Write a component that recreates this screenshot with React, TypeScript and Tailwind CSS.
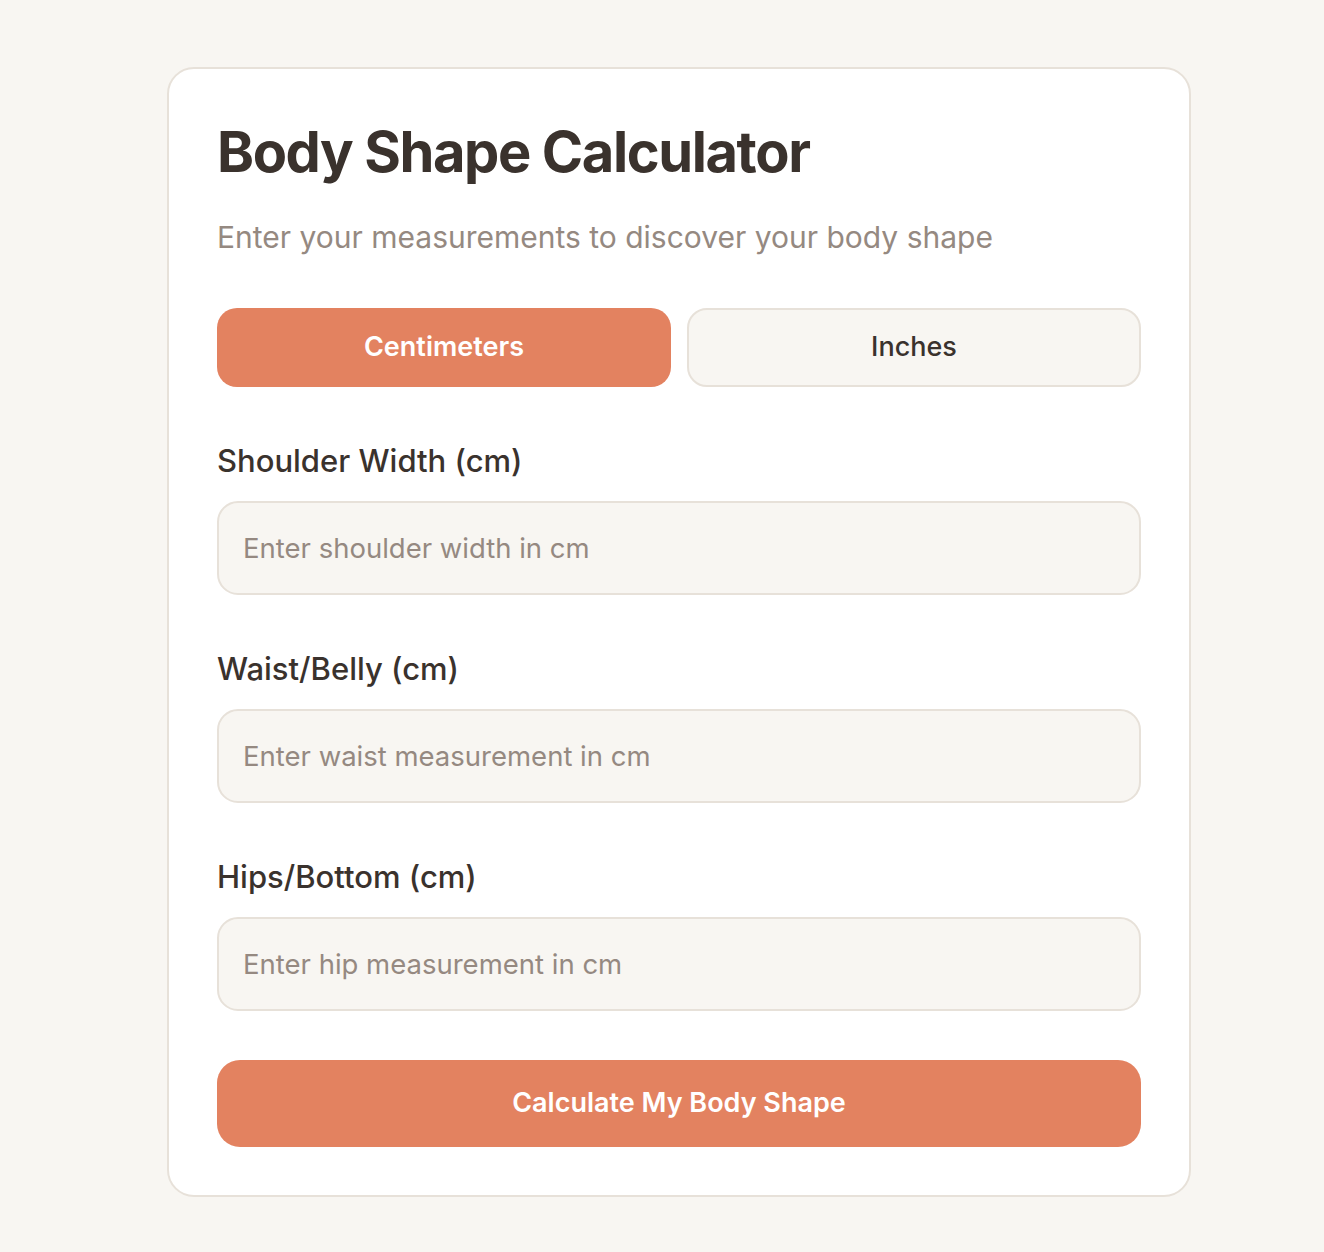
import React from "react";

function Field({ label, placeholder }: { label: string; placeholder: string }) {
  return (
    <div className="flex flex-col">
      <label className="text-[31px] leading-[40px] font-medium text-[#3a322d]">{label}</label>
      <input
        type="text"
        placeholder={placeholder}
        className="mt-[20px] h-[94px] w-full rounded-[21px] border-2 border-[#e7e1d9] bg-[#f8f6f2] px-[24px] text-[27.5px] text-[#3a322d] placeholder:text-[#958981] outline-none"
      />
    </div>
  );
}

export default function App() {
  return (
    <div
      className="min-h-[1252px] w-full bg-[#f8f6f2] pt-[67px]"
      style={{ fontFamily: "Inter, 'Noto Sans', sans-serif" }}
    >
      <div className="ml-[167px] w-[1024px] rounded-[27px] border-2 border-[#e7e1d9] bg-white px-[48px] pt-[48px] pb-[48px]">
        <h1 className="text-[56px] leading-[70px] font-bold tracking-[-0.025em] text-[#3a322d]">
          Body Shape Calculator
        </h1>
        <p className="mt-[30px] text-[30px] leading-[40px] text-[#958981]">
          Enter your measurements to discover your body shape
        </p>
        <div className="mt-[51px] grid grid-cols-2 gap-[16px]">
          <button className="h-[79px] rounded-[20px] bg-[#e38260] text-[27px] font-semibold text-white">
            Centimeters
          </button>
          <button className="h-[79px] rounded-[20px] border-2 border-[#e7e1d9] bg-[#f8f6f2] text-[27px] font-medium text-[#3a322d]">
            Inches
          </button>
        </div>
        <div className="mt-[54px] flex flex-col gap-[54px]">
          <Field label="Shoulder Width (cm)" placeholder="Enter shoulder width in cm" />
          <Field label="Waist/Belly (cm)" placeholder="Enter waist measurement in cm" />
          <Field label="Hips/Bottom (cm)" placeholder="Enter hip measurement in cm" />
        </div>
        <button className="mt-[49px] h-[87px] w-full rounded-[23px] bg-[#e38260] text-[27px] font-semibold text-white">
          Calculate My Body Shape
        </button>
      </div>
    </div>
  );
}
